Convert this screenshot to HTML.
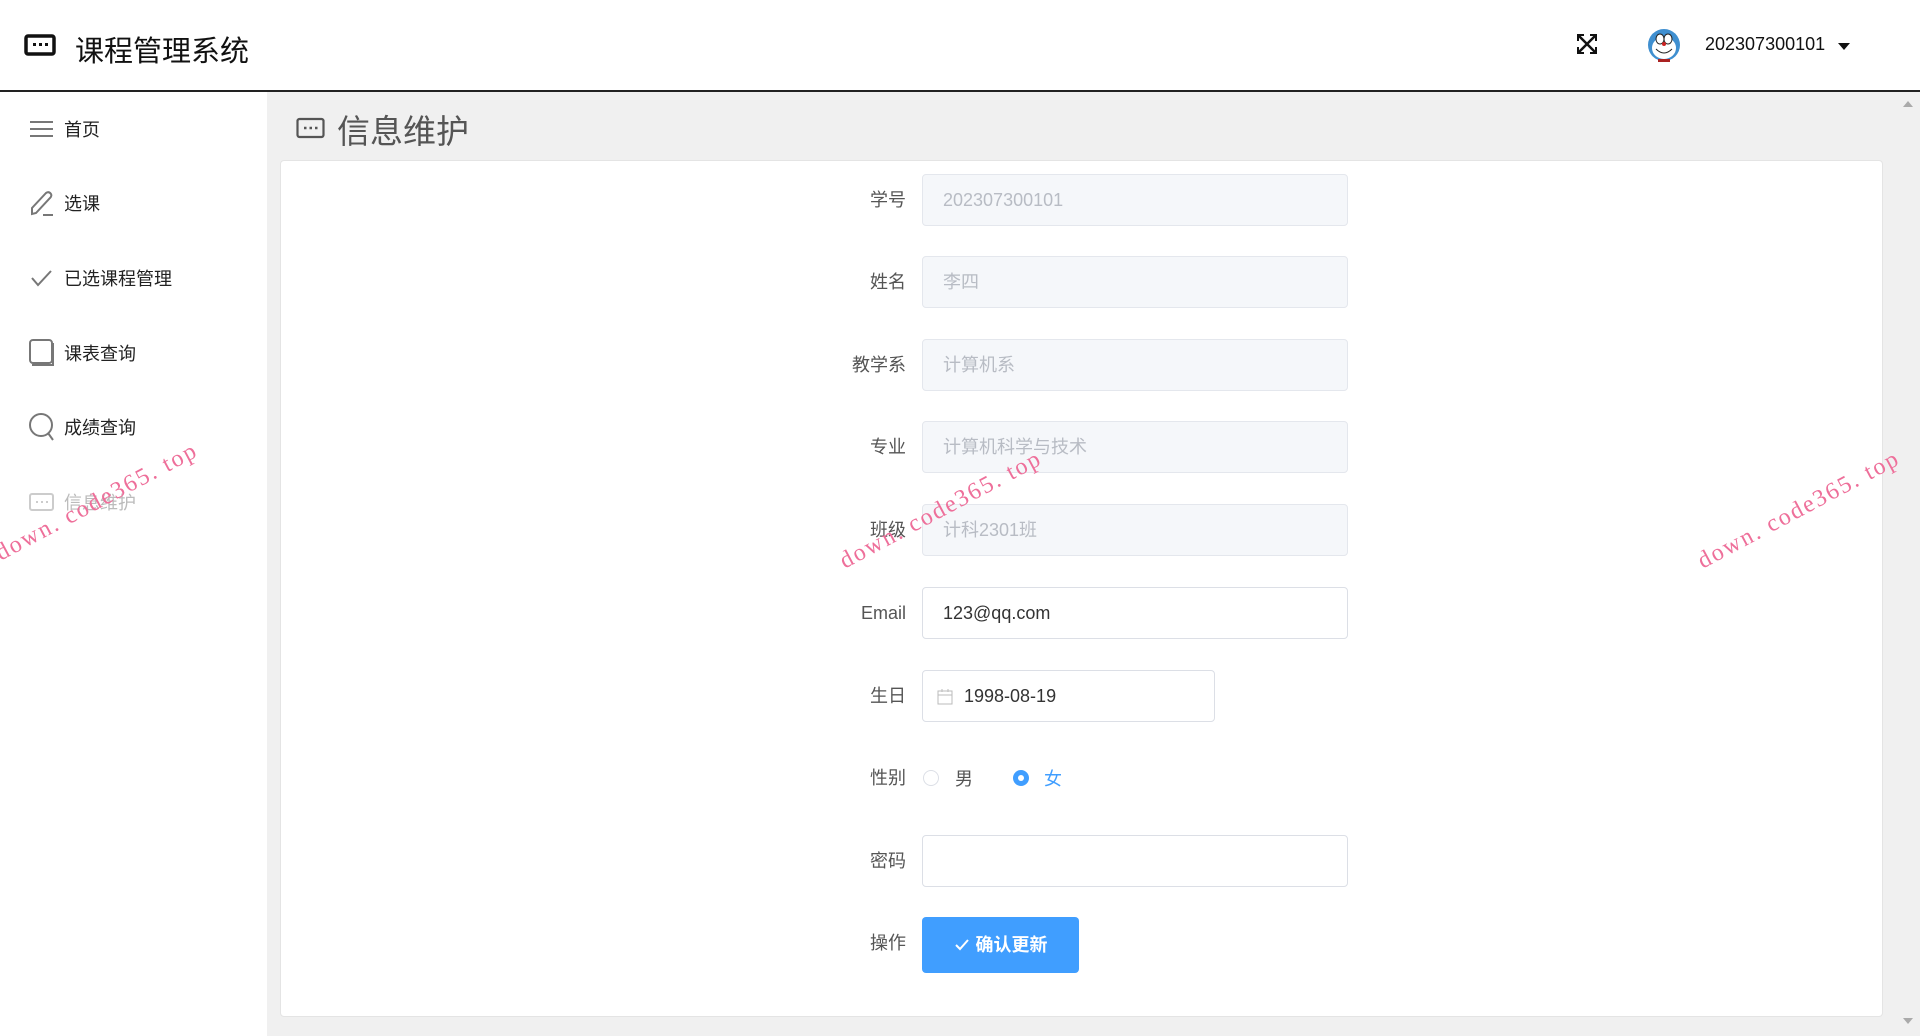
<!DOCTYPE html>
<html><head><meta charset="utf-8"><style>
*{box-sizing:border-box;margin:0;padding:0}
body{width:1920px;height:1036px;overflow:hidden;background:#f0f0f0;font-family:"Liberation Sans","Noto Sans CJK SC",sans-serif;position:relative}
.hdr{position:absolute;left:0;top:0;width:1920px;height:92px;background:#fff;border-bottom:2px solid #222}
.side{position:absolute;left:0;top:92px;width:267px;height:944px;background:#fff}
.mi{position:absolute;left:29px;height:30px;display:flex;align-items:center;font-size:18px;color:#222}
.mi svg{margin-right:10px}
.card{position:absolute;left:280px;top:160px;width:1603px;height:857px;background:#fff;border:1px solid #e4e4e4;border-radius:4px}
.lbl{position:absolute;right:1014px;font-size:18px;color:#555;text-align:right;height:52px;line-height:52px}
.inp{position:absolute;left:922px;width:426px;height:52px;border:1px solid #dcdfe6;border-radius:4px;font-size:18px;line-height:50px;padding-left:20px;color:#333;background:#fff}
.dis{background:#f5f7fa;border-color:#e4e7ed;color:#b8bcc4}
.wm{position:absolute;color:#ee6f9a;font-family:"Liberation Serif",serif;font-size:24px;transform:rotate(-28deg);transform-origin:left bottom;white-space:nowrap;letter-spacing:2px}
</style></head><body>
<div class="hdr">
<svg style="position:absolute;left:24px;top:34px" width="32" height="22" viewBox="0 0 32 22"><rect x="2" y="2" width="28" height="18" rx="2" fill="none" stroke="#111" stroke-width="3.5"/><rect x="9" y="9" width="3" height="3" fill="#111"/><rect x="15" y="9" width="3" height="3" fill="#111"/><rect x="21" y="9" width="3" height="3" fill="#111"/></svg>
<div style="position:absolute;left:75px;top:28px;font-size:29px;color:#111">课程管理系统</div>
<svg style="position:absolute;left:1576px;top:33px" width="22" height="22" viewBox="0 0 22 22" stroke="#111" stroke-width="2.5" fill="none"><path d="M3 3L19 19M19 3L3 19"/><path d="M2 8V2H8M14 2H20V8M20 14V20H14M8 20H2V14" stroke-width="2"/></svg>
<svg style="position:absolute;left:1647px;top:28px" width="34" height="36" viewBox="0 0 34 36"><circle cx="17" cy="17" r="16" fill="#3f8fd0"/><ellipse cx="17" cy="20" rx="12" ry="11" fill="#fff"/><ellipse cx="13" cy="11" rx="4" ry="5" fill="#fff" stroke="#222"/><ellipse cx="21" cy="11" rx="4" ry="5" fill="#fff" stroke="#222"/><circle cx="17" cy="16" r="2" fill="#c22"/><path d="M9 21Q17 29 25 21" stroke="#222" fill="none"/><rect x="11" y="31" width="12" height="3" fill="#a22"/></svg>
<div style="position:absolute;left:1705px;top:34px;font-size:18px;color:#111">202307300101</div>
<div style="position:absolute;left:1838px;top:43px;width:0;height:0;border-left:6px solid transparent;border-right:6px solid transparent;border-top:7px solid #111"></div>
</div>
<div class="side">
<div class="mi" style="top:22px"><svg width="25" height="22" viewBox="0 0 25 22" stroke="#777" stroke-width="2"><path d="M1 4H24M1 11H24M1 18H24"/></svg>首页</div>
<div class="mi" style="top:96px"><svg width="25" height="28" viewBox="0 0 25 28" stroke="#777" stroke-width="2" fill="none"><path d="M3 25L3 19L17 4Q20 2 22 5Q23 7 21 9L7 24Z"/><path d="M14 26H24"/></svg>选课</div>
<div class="mi" style="top:171px"><svg width="25" height="22" viewBox="0 0 25 22" stroke="#777" stroke-width="2" fill="none"><path d="M3 11L9 18L22 4"/></svg>已选课程管理</div>
<div class="mi" style="top:246px"><svg width="25" height="28" viewBox="0 0 25 28" stroke="#777" stroke-width="2" fill="none"><rect x="1" y="1" width="22" height="23" rx="3"/><path d="M3 26H24V4"/></svg>课表查询</div>
<div class="mi" style="top:320px"><svg width="25" height="28" viewBox="0 0 25 28" stroke="#777" stroke-width="2" fill="none"><circle cx="12" cy="12" r="11"/><path d="M19 20L24 27"/></svg>成绩查询</div>
<div class="mi" style="top:395px;color:#bbb"><svg width="25" height="22" viewBox="0 0 25 22" stroke="#ccc" stroke-width="2" fill="none"><rect x="1" y="3" width="23" height="16" rx="2"/><path d="M7 11h2M12 11h2M17 11h2"/></svg>信息维护</div>
</div>
<svg style="position:absolute;left:296px;top:117px" width="29" height="22" viewBox="0 0 29 22" stroke="#555" stroke-width="2.2" fill="none"><rect x="1.5" y="2" width="26" height="18" rx="2"/><path d="M8 11h2.5M13.5 11h2.5M19 11h2.5" stroke-width="2.6"/></svg>
<div style="position:absolute;left:337px;top:105px;font-size:33px;color:#555">信息维护</div>
<div class="card"></div>
<div class="lbl" style="top:174px">学号</div><div class="inp dis" style="top:174px">202307300101</div>
<div class="lbl" style="top:256px">姓名</div><div class="inp dis" style="top:256px">李四</div>
<div class="lbl" style="top:339px">教学系</div><div class="inp dis" style="top:339px">计算机系</div>
<div class="lbl" style="top:421px">专业</div><div class="inp dis" style="top:421px">计算机科学与技术</div>
<div class="lbl" style="top:504px">班级</div><div class="inp dis" style="top:504px">计科2301班</div>
<div class="lbl" style="top:587px">Email</div><div class="inp" style="top:587px">123@qq.com</div>
<div class="lbl" style="top:670px">生日</div><div class="inp" style="top:670px;width:293px;padding-left:41px">1998-08-19</div>
<svg style="position:absolute;left:937px;top:689px" width="16" height="16" viewBox="0 0 16 16" stroke="#bbb" fill="none"><rect x="1" y="2" width="14" height="13"/><path d="M1 6H15M5 0V3M11 0V3"/></svg>
<div class="lbl" style="top:752px">性别</div>
<div style="position:absolute;left:923px;top:770px;width:16px;height:16px;border:1px solid #dcdfe6;border-radius:50%"></div>
<div style="position:absolute;left:955px;top:765px;font-size:18px;color:#555">男</div>
<div style="position:absolute;left:1013px;top:770px;width:16px;height:16px;border-radius:50%;background:#409eff"><div style="position:absolute;left:5px;top:5px;width:6px;height:6px;border-radius:50%;background:#fff"></div></div>
<div style="position:absolute;left:1044px;top:765px;font-size:18px;color:#409eff">女</div>
<div class="lbl" style="top:835px">密码</div><div class="inp" style="top:835px"></div>
<div class="lbl" style="top:917px">操作</div>
<div style="position:absolute;left:922px;top:917px;width:157px;height:56px;background:#409eff;border-radius:4px;color:#fff;font-size:18px;font-weight:bold;line-height:56px;text-align:center"><svg width="16" height="14" viewBox="0 0 16 14" style="vertical-align:-1px;margin-right:6px" stroke="#fff" stroke-width="2" fill="none"><path d="M2 7L6 11L14 2"/></svg>确认更新</div>
<div style="position:absolute;left:1898px;top:92px;width:22px;height:944px;background:#f0f0f0"></div>
<div style="position:absolute;left:1903px;top:101px;border-left:5px solid transparent;border-right:5px solid transparent;border-bottom:6px solid #aaa"></div>
<div style="position:absolute;left:1903px;top:1018px;border-left:5px solid transparent;border-right:5px solid transparent;border-top:6px solid #aaa"></div>
<div class="wm" style="left:4px;top:540px">down. code365. top</div>
<div class="wm" style="left:848px;top:548px">down. code365. top</div>
<div class="wm" style="left:1706px;top:548px">down. code365. top</div>
</body></html>
